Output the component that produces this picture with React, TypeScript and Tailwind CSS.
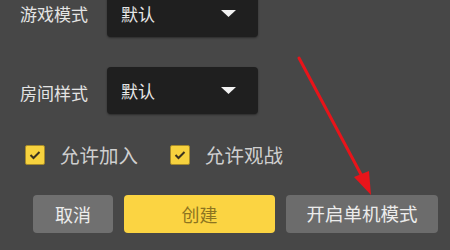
function Select({ value }: { value: string }) {
  return (
    <div className="flex items-center justify-between w-[151px] h-[47px] rounded-[4px] bg-[#1f1f1f] pl-[14px] pr-[22px] shadow-[0_1px_2px_rgba(0,0,0,0.4)]">
      <span className="text-[17px] text-[#e6e6e6]">{value}</span>
      <svg width="15" height="7" viewBox="0 0 15 7">
        <polygon points="0,0 15,0 7.5,7" fill="#f2f2f2" />
      </svg>
    </div>
  );
}

function Check({ label }: { label: string }) {
  return (
    <div className="flex items-center gap-[15px]">
      <div className="w-[20px] h-[20px] rounded-[2px] bg-[#f7d23e] border border-[#a68a2a] flex items-center justify-center">
        <svg width="12" height="10" viewBox="0 0 12 10">
          <path d="M1.5 5 L4.5 8 L10.5 2" fill="none" stroke="#3b3320" strokeWidth="2" />
        </svg>
      </div>
      <span className="text-[19.5px] leading-none text-[#cfcfcf]">{label}</span>
    </div>
  );
}

export default function App() {
  return (
    <div
      className="relative w-[450px] h-[250px] overflow-hidden bg-[#474747]"
      style={{ fontFamily: '"Noto Sans CJK SC", "Noto Sans", sans-serif' }}
    >
      <div className="pl-[20px] flex flex-col">
        <div className="flex items-center gap-[19px] mt-[-10px]">
          <span className="text-[17px] text-[#e4e4e4] leading-none">游戏模式</span>
          <Select value="默认" />
        </div>
        <div className="flex items-center gap-[19px] mt-[30px]">
          <span className="text-[17px] text-[#e4e4e4] leading-none pt-[4px]">房间样式</span>
          <Select value="默认" />
        </div>
        <div className="flex items-center mt-[31px] pl-[5px]">
          <Check label="允许加入" />
          <div className="ml-[32px]">
            <Check label="允许观战" />
          </div>
        </div>
        <div className="flex items-center mt-[30px] pl-[13px]">
          <button className="w-[80px] h-[38px] rounded-[4px] bg-[#707070] text-[18px] text-[#ececec]">取消</button>
          <button className="ml-[11px] w-[151px] h-[38px] rounded-[4px] bg-[#fbd442] text-[18px] text-[#8d7420]">创建</button>
          <button className="ml-[11px] w-[152px] h-[38px] rounded-[4px] bg-[#6c6c6c] text-[18.5px] text-[#ececec]">开启单机模式</button>
        </div>
      </div>
      <svg className="absolute left-0 top-0" width="450" height="250" viewBox="0 0 450 250">
        <line x1="299" y1="58" x2="364" y2="180" stroke="#e8141a" strokeWidth="3" strokeLinecap="round" />
        <polygon points="371,195 354,177 369,171" fill="#e8141a" />
      </svg>
    </div>
  );
}
